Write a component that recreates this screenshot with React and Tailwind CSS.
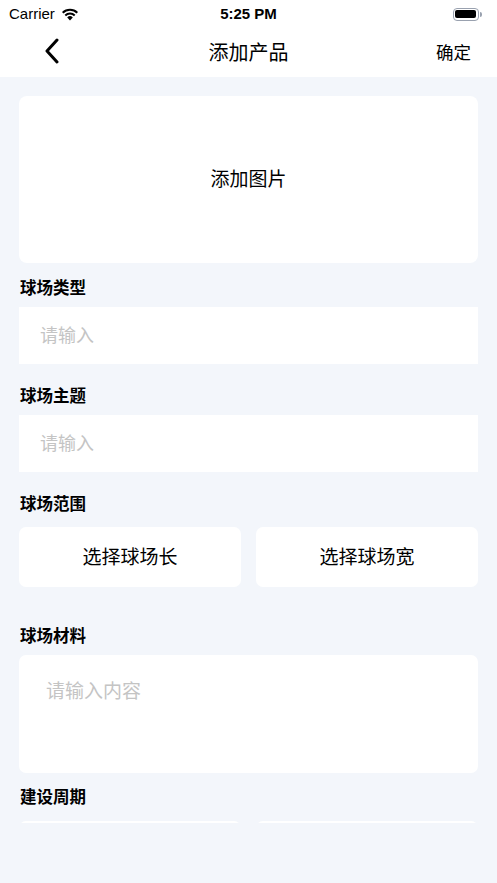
import React from "react";

const FONT = { fontFamily: '"Noto Sans", "Noto Sans CJK SC", sans-serif' };

function Label({ children, className = "" }) {
  return (
    <div className={`shrink-0 px-[20px] text-[16.5px] leading-[22px] font-bold text-black ${className}`}>
      {children}
    </div>
  );
}

function StatusBar() {
  return (
    <div className="h-[28px] flex items-center justify-between px-[9px] text-black">
      <div className="flex items-center gap-[6px] w-[120px]">
        <span className="text-[15px]" style={{ fontFamily: '"Liberation Sans", sans-serif' }}>Carrier</span>
        <svg width="18" height="13" viewBox="0 0 18 13">
          <path d="M9 12.5 L6.2 9.4 A4 4 0 0 1 11.8 9.4 Z" fill="black" />
          <path d="M3.6 6.8 A7.6 7.6 0 0 1 14.4 6.8 L13 8.3 A5.6 5.6 0 0 0 5 8.3 Z" fill="black" />
          <path d="M1 4.1 A11.3 11.3 0 0 1 17 4.1 L15.6 5.6 A9.3 9.3 0 0 0 2.4 5.6 Z" fill="black" />
        </svg>
      </div>
      <span className="text-[15px] font-bold" style={{ fontFamily: '"Liberation Sans", sans-serif' }}>5:25 PM</span>
      <div className="w-[120px] flex justify-end pr-[6px]">
        <div className="flex items-center">
          <div className="w-[26px] h-[13px] rounded-[4px] border border-gray-400 p-[1.5px]">
            <div className="w-full h-full rounded-[2px] bg-black" />
          </div>
          <div className="w-[2px] h-[5px] bg-gray-400 rounded-r-sm ml-[1px]" />
        </div>
      </div>
    </div>
  );
}

function NavBar() {
  return (
    <div className="h-[49px] relative flex items-center justify-center">
      <svg className="absolute left-[43px] top-[10px]" width="18" height="26" viewBox="0 0 18 26">
        <path d="M14 2 L4 13 L14 24" fill="none" stroke="black" strokeWidth="3" strokeLinecap="round" strokeLinejoin="round" />
      </svg>
      <span className="text-[20px] text-black">添加产品</span>
      <span className="absolute right-[26px] text-[17.5px] text-black">确定</span>
    </div>
  );
}

export default function App() {
  return (
    <div className="w-[497px] h-[883px] bg-[#f3f6fb] flex flex-col overflow-hidden" style={FONT}>
      <div className="bg-white shrink-0">
        <StatusBar />
        <NavBar />
      </div>
      <div className="h-[746px] shrink-0 overflow-hidden flex flex-col">
        <div className="shrink-0 mx-[19px] mt-[19px] h-[167px] bg-white rounded-[8px] flex items-center justify-center">
          <span className="text-[19px] text-black">添加图片</span>
        </div>

        <Label className="mt-[14px]">球场类型</Label>
        <div className="shrink-0 mx-[19px] mt-[8px] h-[57px] bg-white flex items-center px-[21px]">
          <span className="text-[18px] text-[#c4c4c4]">请输入</span>
        </div>

        <Label className="mt-[21px]">球场主题</Label>
        <div className="shrink-0 mx-[19px] mt-[8px] h-[57px] bg-white flex items-center px-[21px]">
          <span className="text-[18px] text-[#c4c4c4]">请输入</span>
        </div>

        <Label className="mt-[21px]">球场范围</Label>
        <div className="shrink-0 mx-[19px] mt-[12px] grid grid-cols-2 gap-[15px]">
          <div className="h-[60px] bg-white rounded-[7px] flex items-center justify-center text-[19px] text-black">
            选择球场长
          </div>
          <div className="h-[60px] bg-white rounded-[7px] flex items-center justify-center text-[19px] text-black">
            选择球场宽
          </div>
        </div>

        <Label className="mt-[38px]">球场材料</Label>
        <div className="shrink-0 mx-[19px] mt-[8px] h-[118px] bg-white rounded-[7px] px-[27px] pt-[22px]">
          <span className="text-[19px] text-[#c4c4c4]">请输入内容</span>
        </div>

        <Label className="mt-[13px]">建设周期</Label>
        <div className="shrink-0 mx-[19px] mt-[13px] grid grid-cols-2 gap-[15px]">
          <div className="h-[60px] bg-white rounded-[7px]" />
          <div className="h-[60px] bg-white rounded-[7px]" />
        </div>
      </div>
    </div>
  );
}
